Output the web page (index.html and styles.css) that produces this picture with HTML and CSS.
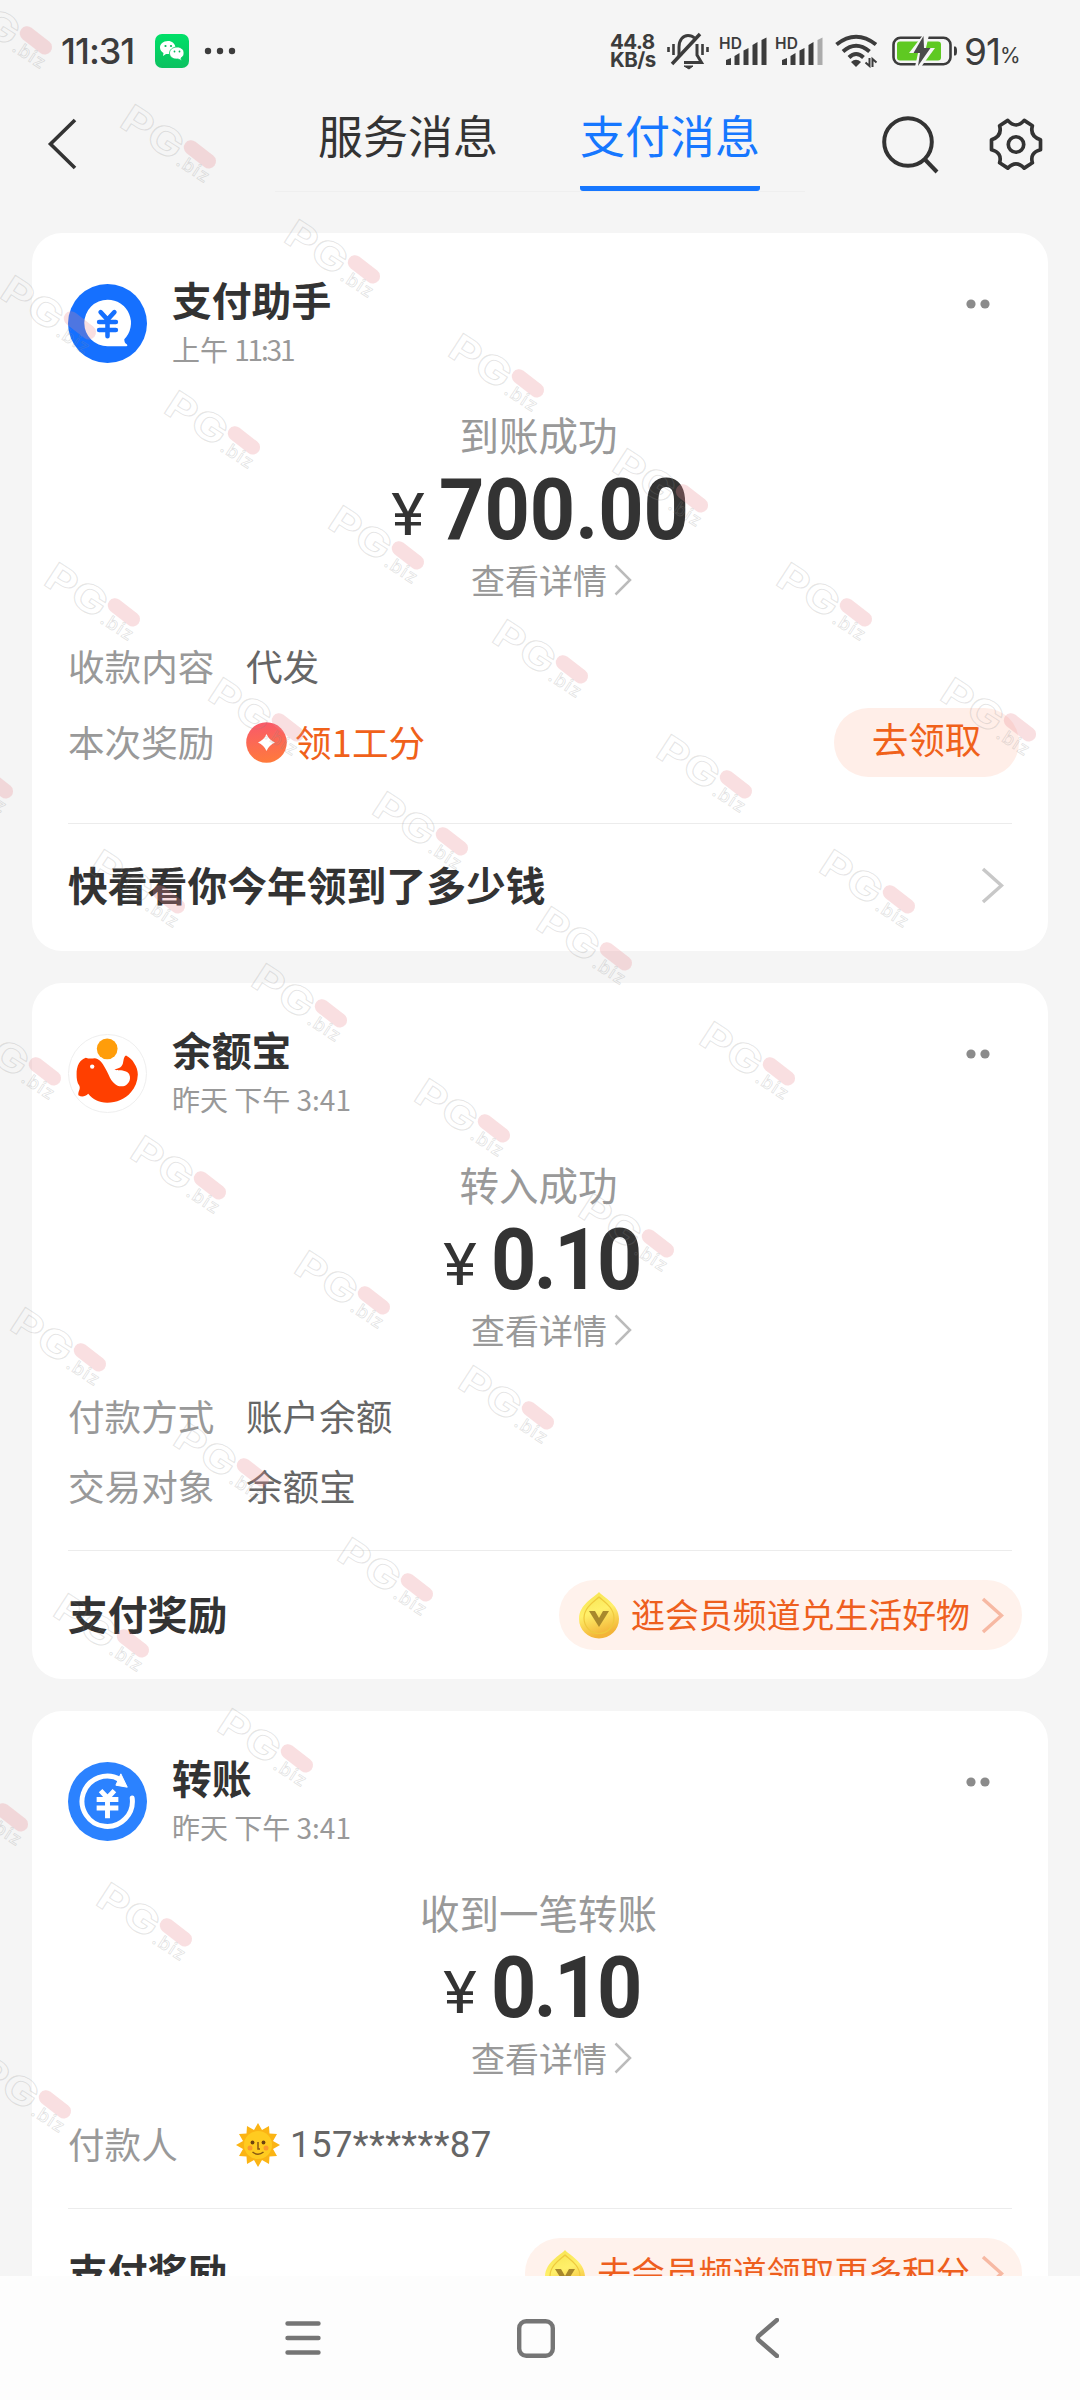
FILE: index.html
```html
<!DOCTYPE html>
<html lang="zh-CN">
<head>
<meta charset="utf-8">
<title>支付消息</title>
<link rel="stylesheet" href="styles.css">
</head>
<body>
<svg width="0" height="0" class="defs">
  <defs>
    <linearGradient id="red" x1="0.3" y1="0" x2="0.4" y2="1"><stop offset="0" stop-color="#f9596b"/><stop offset="1" stop-color="#ff7a3c"/></linearGradient>
    <linearGradient id="gold" x1="0" y1="0" x2="0.3" y2="1"><stop offset="0" stop-color="#f5e24e"/><stop offset="0.5" stop-color="#fff06a"/><stop offset="1" stop-color="#f3b437"/></linearGradient>
    <linearGradient id="green" x1="0" y1="0" x2="0" y2="1"><stop offset="0" stop-color="#00e068"/><stop offset="1" stop-color="#0cc160"/></linearGradient>
    <symbol id="coin" viewBox="0 0 42 48">
      <path d="M21 1C25 6 41 13 41 28A20 19.500 0 0 1 1 28C1 13 17 6 21 1Z" fill="url(#gold)"/>
      <path d="M21 6C25 10 36 16 36 27A15 15.500 0 0 1 6 27C6 16 17 10 21 6Z" fill="none" stroke="#efc93d" stroke-width="1.200"/>
      <path d="M11 20H17L21 27L25 20H31L21 36Z" fill="#a8882c"/>
    </symbol>
    <symbol id="mark" viewBox="0 0 110 90" overflow="visible">
      <g transform="translate(0 22) rotate(33)">
        <text x="-2" y="1" class="mark-big" textLength="66" lengthAdjust="spacingAndGlyphs">PG</text>
        <rect x="64" y="-27" width="37" height="14.500" rx="7.250" fill="#e98a90" fill-opacity="0.27" transform="rotate(5 82 -20)"/>
        <text x="67" y="2" class="mark-small" textLength="35">.biz</text>
      </g>
    </symbol>
  </defs>
</svg>

<div class="screen">
  <header class="status">
    <span class="clock">11:31</span>
    <svg class="wechat" width="34" height="34" viewBox="0 0 34 34"><rect width="34" height="34" rx="7" fill="url(#green)"/><path d="M13 7C8 7 5 10 5 13.500C5 16 6.500 18 8.500 19L8 22L11 20C14 20.500 20 19 20.500 13.500C20 9.500 17 7 13 7Z" fill="#fff"/><path d="M22 13C17.500 13 14.500 16 14.500 19C14.500 23 18 25.500 23 25L26.500 26.500L26 24C28 23 29 21 29 19C29 15.500 26 13 22 13Z" fill="#fff" stroke="#05cc62" stroke-width="0.800"/><g fill="#05b858"><circle cx="10.500" cy="12" r="1.100"/><circle cx="16" cy="12" r="1.100"/><circle cx="19.500" cy="17.500" r="0.900"/><circle cx="24.500" cy="17.500" r="0.900"/></g></svg>
    <svg class="more" width="32" height="8" viewBox="0 0 32 8" fill="#3c3c3c"><circle cx="4" cy="4" r="3.200"/><circle cx="16" cy="4" r="3.200"/><circle cx="28" cy="4" r="3.200"/></svg>
    <div class="speed"><span>44.8</span><span>KB/s</span></div>
    <svg class="bell" width="42" height="38" viewBox="0 0 42 38" fill="none" stroke="#3c3c3c" stroke-width="3"><path d="M12 25V15C12 8 16 3.500 21 3.500C24 3.500 26 4.500 27.500 6M30 12V23L34.500 30.500H17"/><path d="M5 32L33 2" stroke-width="3.500"/><path d="M17 34H26L22 37Z" fill="#3c3c3c" stroke-width="1"/><path d="M1.500 15V20M6.500 12V23M35.500 12V23M40.500 15V20" stroke-width="2.600"/></svg>
    <svg class="signal" width="48" height="32" viewBox="0 0 48 32" fill="#3c3c3c"><text x="-1" y="13.500" class="hd" textLength="23">HD</text><path d="M6 25L11 23V30H6ZM14.500 21L19.500 18V30H14.500ZM23.500 15.500L28.500 13V30H23.500ZM32.500 10L37.500 7V30H32.500ZM41.500 5L46.500 2.500V30H41.500Z"/></svg>
    <svg class="signal second" width="48" height="32" viewBox="0 0 48 32" fill="#3c3c3c"><text x="-1" y="13.500" class="hd" textLength="23">HD</text><path d="M6 25L11 23V30H6ZM14.500 21L19.500 18V30H14.500ZM23.500 15.500L28.500 13V30H23.500ZM32.500 10L37.500 7V30H32.500Z"/><path d="M41.500 5L46.500 2.500V30H41.500Z" fill="#ababab"/></svg>
    <svg class="wifi" width="43" height="34" viewBox="0 0 43 34" fill="none" stroke="#3c3c3c" stroke-width="4"><path d="M1.500 10.500Q21 -5 41 10.500M8 17.500Q21 6 34.500 17.500M14 23.500Q21 16.500 28.500 23.500"/><path d="M16 28Q21 23.500 26 28L21 33Z" fill="#3c3c3c" stroke="none"/><path d="M34.500 24V32L30.500 28.500M37.500 33V25L41.500 28.500" stroke-width="2"/></svg>
    <svg class="battery" width="66" height="30" viewBox="0 0 66 30"><rect x="1.500" y="1.800" width="57" height="26.400" rx="7" fill="none" stroke="#3c3c3c" stroke-width="2.600"/><rect x="5" y="5.500" width="44" height="19" rx="3" fill="#5fc922"/><path d="M31 -1L17 17H26L23 31H29L43 12H34L37 -1Z" fill="#f5f5f5"/><path d="M31.500 0L21.500 17H28L26 30L38.500 12H32Z" fill="#4a4a4a"/><path d="M62 10.500H63Q65 10.500 65 15Q65 19.500 63 19.500H62Z" fill="#3c3c3c"/></svg>
    <span class="charge">91</span><span class="percent">%</span>
  </header>

  <nav class="topbar">
    <svg class="back" width="32" height="52" viewBox="0 0 32 52" fill="none" stroke="#333" stroke-width="3.600"><path d="M29 2L4.500 26L29 50"/></svg>
    <div class="tabs"><a class="tab">服务消息</a><a class="tab active">支付消息</a></div>
    <svg class="search" width="58" height="58" viewBox="0 0 58 58" fill="none" stroke="#333" stroke-width="4"><circle cx="26" cy="26" r="23.800"/><path d="M42.500 43L55 56"/></svg>
    <svg class="gear" width="56" height="55" viewBox="0 0 58 57" fill="none" stroke="#333" stroke-width="3.800" stroke-linejoin="round"><path d="M20.500 3.500Q29 13 37.500 3.500L46 9Q43 20 54.400 23.500V34Q43 37 46 47.500L37.500 53Q29 44 20.500 53L12 47.500Q15 37 3.600 34V23.500Q15 20 12 9Z"/><circle cx="29" cy="28.500" r="8"/></svg>
  </nav>

  <main class="feed">
    <section class="card">
      <div class="head">
        <svg class="avatar" viewBox="0 0 80 80"><circle cx="40" cy="40" r="40" fill="#1570ff"/><path d="M40 16A23.300 23.300 0 1 0 40 63H59Q61 62.500 59.500 61Q57 60 57 56A23.500 23.500 0 0 0 40 16Z" fill="#fff"/><path d="M33 28.500L40 36L47 28.500M40 36V53M31.500 38.500H48.500M31.500 46.500H48.500" fill="none" stroke="#1570ff" stroke-width="4.600" stroke-linecap="round"/></svg>
        <div class="who"><h2>支付助手</h2><time>上午 <span class="tight">11:31</span></time></div>
        <svg class="dots" width="24" height="10" viewBox="0 0 24 10"><circle cx="5" cy="5" r="4.600"/><circle cx="19" cy="5" r="4.600"/></svg>
      </div>
      <div class="hero">
        <p class="result">到账成功</p>
        <p class="amount"><span class="yen">¥</span><span class="num">700.00</span></p>
        <p class="detail">查看详情<svg width="18" height="32" viewBox="0 0 18 32"><path d="M1.500 1.500L16 16L1.500 30.500"/></svg></p>
      </div>
      <dl class="facts">
        <div class="fact"><dt>收款内容</dt><dd>代发</dd></div>
        <div class="fact reward"><dt>本次奖励</dt><dd class="hot"><svg width="41" height="41" viewBox="0 0 41 41"><circle cx="20.500" cy="20.500" r="20.300" fill="url(#red)"/><path d="M20.500 12Q23 18 29 20.500Q23 23 20.500 29Q18 23 12 20.500Q18 18 20.500 12Z" fill="#fff"/></svg>领1工分</dd><a class="claim">去领取</a></div>
      </dl>
      <div class="foot tall"><h3>快看看你今年领到了多少钱</h3><svg class="chev" width="23" height="37" viewBox="0 0 23 37"><path d="M2 2L20.500 18.500L2 35"/></svg></div>
    </section>

    <section class="card">
      <div class="head">
        <svg class="avatar" viewBox="0 0 80 80"><circle cx="40" cy="40" r="39.500" fill="#fff" stroke="#eee"/><circle cx="39.700" cy="15" r="10.500" fill="#ff9d0a"/><path d="M8.700 41C8.500 32 12 26 18 24Q22 25.500 27 24.500C31 25 34 28 35.500 31C38 35 39 37 41 41C43 46 45 48.500 47 50C49 52 51.500 53 53.700 53C57 53 59 52 60.500 50C62.500 48 63 46 62.700 43C62 40 61 39 58.700 38C54 36 50 38 47 35.500C52 35 54.500 33 55.500 30C56.500 27 56 23 58.800 21.700C63 24 65 26 67 29.500C69.500 33 70.700 37 70.700 41C70.500 48 68 54 63.700 59C58 66 49 69.500 39.700 69.500C31 69.500 25 66 20.500 60.500C17 63.500 14 64 10.500 62C10 58 13 56 11.500 52.500C9 49 8.700 45 8.700 41Z" fill="#ff3f00"/><circle cx="24.500" cy="33" r="2.200" fill="#fff"/></svg>
        <div class="who"><h2>余额宝</h2><time>昨天 下午 3:41</time></div>
        <svg class="dots" width="24" height="10" viewBox="0 0 24 10"><circle cx="5" cy="5" r="4.600"/><circle cx="19" cy="5" r="4.600"/></svg>
      </div>
      <div class="hero">
        <p class="result">转入成功</p>
        <p class="amount"><span class="yen">¥</span><span class="num short">0.10</span></p>
        <p class="detail">查看详情<svg width="18" height="32" viewBox="0 0 18 32"><path d="M1.500 1.500L16 16L1.500 30.500"/></svg></p>
      </div>
      <dl class="facts">
        <div class="fact"><dt>付款方式</dt><dd>账户余额</dd></div>
        <div class="fact"><dt>交易对象</dt><dd>余额宝</dd></div>
      </dl>
      <div class="foot"><h3>支付奖励</h3><a class="promo"><svg width="42" height="48"><use href="#coin"/></svg><span>逛会员频道兑生活好物</span><svg class="chev" width="23" height="37" viewBox="0 0 23 37"><path d="M2 2L20.500 18.500L2 35"/></svg></a></div>
    </section>

    <section class="card">
      <div class="head">
        <svg class="avatar" viewBox="0 0 80 80"><circle cx="40" cy="40" r="40" fill="#2b82ff"/><path d="M65 36.500A25.500 25.500 0 1 1 53 18" fill="none" stroke="#fff" stroke-width="5" stroke-linecap="round"/><path d="M53.500 12L60 25.500L48.500 23.500Z" fill="#fff" stroke="#fff" stroke-linejoin="round"/><path d="M33 29L40 36.500L47 29M40 36V57M29 38H51M29 46.500H51" fill="none" stroke="#fff" stroke-width="5"/></svg>
        <div class="who"><h2>转账</h2><time>昨天 下午 3:41</time></div>
        <svg class="dots" width="24" height="10" viewBox="0 0 24 10"><circle cx="5" cy="5" r="4.600"/><circle cx="19" cy="5" r="4.600"/></svg>
      </div>
      <div class="hero">
        <p class="result">收到一笔转账</p>
        <p class="amount"><span class="yen">¥</span><span class="num short">0.10</span></p>
        <p class="detail">查看详情<svg width="18" height="32" viewBox="0 0 18 32"><path d="M1.500 1.500L16 16L1.500 30.500"/></svg></p>
      </div>
      <dl class="facts">
        <div class="fact"><dt>付款人</dt><dd class="payer"><svg width="44" height="44" viewBox="-22 -22 44 44"><path d="M0 -22L4 -15L11 -19L11.500 -11.500L19 -11L15 -4L22 0L15 4L19 11L11.500 11.500L11 19L4 15L0 22L-4 15L-11 19L-11.500 11.500L-19 11L-15 4L-22 0L-15 -4L-19 -11L-11.500 -11.500L-11 -19L-4 -15Z" fill="#fbb414"/><circle r="14" fill="#ffcb20"/><path d="M-5.500 7Q0 11.500 5.500 7M0 -3V4H2" fill="none" stroke="#8a5a12" stroke-width="1.500"/><g fill="#6d4310"><circle cx="-5.500" cy="-2.500" r="1.900"/><circle cx="5.500" cy="-2.500" r="1.900"/></g><g fill="#fb9a2c"><circle cx="-8" cy="3" r="2.500"/><circle cx="8" cy="3" r="2.500"/></g></svg><span>157******87</span></dd></div>
      </dl>
      <div class="foot"><h3>支付奖励</h3><a class="promo"><svg width="42" height="48"><use href="#coin"/></svg><span>去会员频道领取更多积分</span><svg class="chev" width="23" height="37" viewBox="0 0 23 37"><path d="M2 2L20.500 18.500L2 35"/></svg></a></div>
    </section>
  </main>

  <svg class="marks" width="1080" height="2276" viewBox="0 0 1080 2276">
    <defs>
      <g id="one"><use href="#mark" width="110" height="90"/></g>
    </defs>
    <use href="#one" x="-44" y="-10"/><use href="#one" x="120" y="104"/><use href="#one" x="284" y="219"/><use href="#one" x="448" y="333"/><use href="#one" x="612" y="448"/><use href="#one" x="776" y="562"/><use href="#one" x="940" y="677"/>
    <use href="#one" x="0" y="275"/><use href="#one" x="164" y="390"/><use href="#one" x="328" y="505"/><use href="#one" x="492" y="619"/><use href="#one" x="656" y="734"/><use href="#one" x="819" y="849"/>
    <use href="#one" x="44" y="562"/><use href="#one" x="208" y="677"/><use href="#one" x="372" y="791"/><use href="#one" x="536" y="906"/><use href="#one" x="699" y="1021"/>
    <use href="#one" x="-83" y="734"/><use href="#one" x="89" y="849"/><use href="#one" x="251" y="963"/><use href="#one" x="414" y="1078"/><use href="#one" x="578" y="1193"/>
    <use href="#one" x="-35" y="1021"/><use href="#one" x="130" y="1135"/><use href="#one" x="294" y="1250"/><use href="#one" x="458" y="1365"/>
    <use href="#one" x="10" y="1307"/><use href="#one" x="173" y="1422"/><use href="#one" x="337" y="1537"/>
    <use href="#one" x="53" y="1593"/><use href="#one" x="217" y="1708"/>
    <use href="#one" x="-68" y="1767"/><use href="#one" x="96" y="1882"/>
    <use href="#one" x="-25" y="2054"/>
  </svg>
</div>

<footer class="sysnav">
  <svg width="36" height="36" viewBox="0 0 36 36"><path d="M2.500 3.500H33.500M2.500 18H33.500M2.500 32.500H33.500"/></svg>
  <svg width="38" height="39" viewBox="0 0 38 39"><rect x="2.200" y="2.200" width="33.600" height="34.600" rx="7"/></svg>
  <svg width="24" height="40" viewBox="0 0 24 40"><path d="M22 2L3.500 18Q2 20 3.500 22L22 38"/></svg>
</footer>
</body>
</html>
```
FILE: styles.css
```css
* { box-sizing: border-box; margin: 0; padding: 0; }

body {
  width: 1080px;
  height: 2400px;
  overflow: hidden;
  background: #f5f5f5;
  color: #333;
  font-family: "Noto Sans CJK SC", sans-serif;
}

svg { display: block; flex: none; }
.defs { position: absolute; }

.screen { position: relative; height: 2276px; overflow: hidden; }

/* system status bar */
.status {
  display: flex;
  align-items: center;
  height: 102px;
  padding-left: 61px;
  color: #3c3c3c;
  font-family: Inter, sans-serif;
}
.clock { width: 94px; font-size: 36px; font-weight: 500; letter-spacing: -1px; }
.more { margin-left: 15px; }
.speed {
  display: flex;
  flex-direction: column;
  width: 47px;
  margin-left: 374px;
  font-size: 20.5px;
  font-weight: 700;
  line-height: 18.5px;
  letter-spacing: -0.5px;
}
.bell { margin-left: 10px; }
.signal { margin-left: 11px; overflow: visible; }
.signal.second { margin-left: 8px; }
.hd { font-size: 15.5px; font-weight: 600; }
.wifi { margin-left: 11px; }
.battery { margin-left: 14px; }
.charge { margin-left: 6px; font-size: 37px; letter-spacing: -1px; }
.percent { margin-top: 9px; font-size: 21px; }

/* page header */
.topbar { display: flex; height: 131px; padding-left: 46px; }
.back { margin-top: 16px; }
.tabs {
  display: flex;
  gap: 82px;
  height: 90px;
  margin-left: 197px;
  padding: 0 45px 0 43px;
  border-bottom: 1px solid #efefef;
}
.tab { height: 89px; border-bottom: 5px solid transparent; font-size: 45px; line-height: 65px; }
.tab.active { border-color: #1677ff; border-radius: 3px; color: #1677ff; }
.search { margin: 14px 0 0 77px; }
.gear { margin: 15px 0 0 48px; }

/* message cards */
.feed { display: flex; flex-direction: column; gap: 32px; padding: 0 32px; }
.card { flex: none; padding: 0 36px; border-radius: 30px; background: #fff; }
.head { display: flex; height: 175px; padding-top: 51px; }
.avatar { width: 79px; height: 79px; }
.who { flex: 1; margin-left: 25px; }
h2 { margin-top: -14px; font-size: 39.8px; font-weight: 700; line-height: 58px; }
time { display: block; color: #999; font-size: 28px; line-height: 42px; }
.tight { letter-spacing: -2.2px; }
.dots { margin: 15px 22px 0 0; fill: #8b8b8b; }

.hero { display: flex; flex-direction: column; align-items: center; height: 223px; color: #999; }
.result { height: 56px; padding-right: 3px; font-size: 39.5px; line-height: 52px; }
.amount {
  display: flex;
  align-items: baseline;
  height: 89px;
  color: #333;
  font-family: Roboto, sans-serif;
  font-weight: 700;
  line-height: 92px;
}
.yen { width: 34px; margin-right: 14px; font-size: 59px; font-weight: 400; text-align: center; transform: translateY(-4px) scaleX(1.08); }
.num { margin-right: -21px; font-size: 86px; transform: scaleX(0.92); transform-origin: 0 50%; }
.num.short { margin-right: -15px; letter-spacing: -2.8px; }
.detail { display: flex; align-items: center; gap: 7px; height: 54px; padding-left: 23px; font-size: 34px; line-height: 54px; }
.detail svg { fill: none; stroke: #bbb; stroke-width: 2.5; }

.facts { padding-bottom: 29px; }
.fact { display: flex; align-items: center; height: 70px; padding-bottom: 1px; font-size: 36.6px; line-height: 54px; }
.fact dt { width: 178px; color: #999; }
.fact dd { color: #666; }
.reward { height: 93px; padding-bottom: 11px; }
.reward .hot { display: flex; flex: 1; align-items: center; gap: 8px; color: #f0611a; }
.claim {
  width: 185px;
  height: 69px;
  margin-right: -7px;
  border-radius: 35px;
  background: #ffeee8;
  color: #f0611a;
  line-height: 62px;
  text-align: center;
}
.fact .payer { display: flex; align-items: center; gap: 10px; margin-left: -10px; padding-top: 3px; font-family: Roboto, sans-serif; letter-spacing: 0.4px; }

.foot { display: flex; align-items: center; justify-content: space-between; height: 129px; border-top: 1px solid #ececec; }
.foot.tall { height: 128px; padding-bottom: 4px; }
h3 { padding-bottom: 4px; font-size: 39.8px; font-weight: 700; line-height: 58px; }
.chev { fill: none; stroke: #c8c8c8; stroke-width: 3.5; }
.foot.tall .chev { margin-right: 8px; }
.promo {
  display: flex;
  align-items: center;
  height: 70px;
  margin-right: -10px;
  padding: 0 18px 0 19px;
  border-radius: 35px;
  background: #fff2ec;
  color: #ee5f1e;
  font-size: 33.9px;
}
.promo span { margin: 0 11px; padding-bottom: 2px; line-height: 60px; }
.promo .chev { stroke: #f7b9a3; }

/* overlay of tilted marks */
.marks { position: absolute; top: 0; left: 0; font-family: Inter, sans-serif; }
.mark-big { fill: none; stroke: #8a8a8a; stroke-width: 1; stroke-opacity: 0.22; font-size: 38px; font-weight: 700; }
.mark-small { fill: none; stroke: #8a8a8a; stroke-width: 0.8; stroke-opacity: 0.25; font-size: 18px; font-weight: 500; }

/* system navigation */
.sysnav { display: flex; align-items: center; height: 124px; padding-left: 285px; background: #fdfdfd; }
.sysnav svg { fill: none; stroke: #757575; stroke-width: 4.4; stroke-linecap: round; }
.sysnav svg:nth-child(2) { margin-left: 196px; }
.sysnav svg:nth-child(3) { margin-left: 200px; }
```
